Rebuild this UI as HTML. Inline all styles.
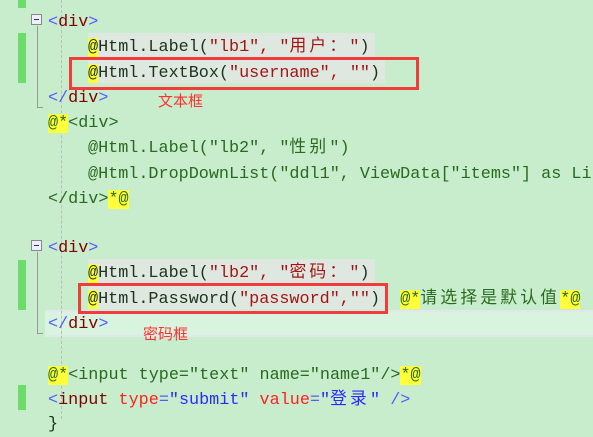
<!DOCTYPE html>
<html><head><meta charset="utf-8"><style>
html,body{margin:0;padding:0}
body{width:593px;height:419px;background:#c7edcd;position:relative;overflow:hidden;font-family:"Liberation Mono","Noto Sans CJK SC",monospace;font-size:16.8px}
.l{position:absolute;white-space:pre;height:25px;line-height:25px;margin-top:2px}
.c{letter-spacing:3.2px}
.y{background:#ffff3a}
.bg{position:absolute;background:#dfe8e0}
.g{color:#1a331a}
.s{color:#a31515}
.cm{color:#2a6a1e}
.b{color:#5a5aff}
.r{color:#800000}
.rd{color:#ff2020}
.sb{color:#2a2aff}
.bar{position:absolute;left:18px;width:8px;background:#6ddc6d}
.box{position:absolute;border:3px solid #f23c3c;box-sizing:border-box}
.fold{position:absolute;left:31px;width:11px;height:11px;border:1px solid #888;background:#eef;box-sizing:border-box}
.fold:after{content:"";position:absolute;left:2px;top:4px;width:5px;height:1px;background:#333}
.vl{position:absolute;left:37px;width:1px;background:#999}
.ann{position:absolute;color:#ff3030;font-family:"Noto Sans CJK SC",sans-serif;font-size:15px}
</style></head><body>
<div style="position:absolute;left:45px;top:310px;width:548px;height:23px;background:#d8f3de;border-top:2px solid #e4e6ee;border-bottom:2px solid #e4e6ee"></div>
<div class="bg" style="left:88px;top:33px;width:287px;height:25px"></div>
<div class="bg" style="left:88px;top:58px;width:297px;height:25px"></div>
<div class="bg" style="left:88px;top:259px;width:287px;height:25px"></div>
<div class="bg" style="left:88px;top:284px;width:297px;height:25px"></div>
<div style="position:absolute;left:61px;top:0;height:419px;border-left:1px dashed #bbb"></div>
<div class="bar" style="top:0;height:8px"></div>
<div class="bar" style="top:33px;height:50px"></div>
<div class="bar" style="top:260px;height:50px"></div>
<div class="bar" style="top:385px;height:25px"></div>
<div class="fold" style="top:14px"></div>
<div class="vl" style="top:26px;height:81px"></div>
<div style="position:absolute;left:37px;top:107px;width:6px;height:1px;background:#999"></div>
<div class="fold" style="top:240px"></div>
<div class="vl" style="top:252px;height:81px"></div>
<div style="position:absolute;left:37px;top:333px;width:6px;height:1px;background:#999"></div>

<div class="l" style="left:48px;top:8px"><span class="b">&lt;</span><span class="r">div</span><span class="b">&gt;</span></div>
<div class="l g" style="left:88px;top:33px"><span class="y">@</span>Html.Label(<span class="s">"lb1", "<span class="c">用户：</span>"</span>)</div>
<div class="l g" style="left:88px;top:59px"><span class="y">@</span>Html.TextBox(<span class="s">"username", ""</span>)</div>
<div class="l" style="left:48px;top:84px"><span class="b">&lt;/</span><span class="r">div</span><span class="b">&gt;</span></div>
<div class="l cm" style="left:48px;top:109px"><span class="y">@*</span>&lt;div&gt;</div>
<div class="l cm" style="left:88px;top:134px">@Html.Label("lb2", "<span class="c">性别</span>")</div>
<div class="l cm" style="left:88px;top:160px">@Html.DropDownList("ddl1", ViewData["items"] as Li</div>
<div class="l cm" style="left:48px;top:185px">&lt;/div&gt;<span class="y">*@</span></div>
<div class="l" style="left:48px;top:234px"><span class="b">&lt;</span><span class="r">div</span><span class="b">&gt;</span></div>
<div class="l g" style="left:88px;top:259px"><span class="y">@</span>Html.Label(<span class="s">"lb2", "<span class="c">密码：</span>"</span>)</div>
<div class="l g" style="left:88px;top:285px"><span class="y">@</span>Html.Password(<span class="s">"password",""</span>)  <span class="cm"><span class="y">@*</span><span class="c">请选择是默认值</span><span class="y">*@</span></span></div>
<div class="l" style="left:48px;top:310px"><span class="b">&lt;/</span><span class="r">div</span><span class="b">&gt;</span></div>
<div class="l cm" style="left:48px;top:361px"><span class="y">@*</span>&lt;input type="text" name="name1"/&gt;<span class="y">*@</span></div>
<div class="l" style="left:48px;top:386px"><span class="b">&lt;</span><span class="r">input</span> <span class="rd">type</span><span class="b">=</span><span class="sb">"submit"</span> <span class="rd">value</span><span class="b">=</span><span class="sb">"<span class="c">登录</span>"</span> <span class="b">/&gt;</span></div>
<div class="l g" style="left:48px;top:410px">}</div>

<div class="box" style="left:69px;top:57px;width:350px;height:33px"></div>
<div class="box" style="left:78px;top:283px;width:310px;height:31px"></div>
<div class="ann" style="left:158px;top:90px">文本框</div>
<div class="ann" style="left:143px;top:323px">密码框</div>
</body></html>
